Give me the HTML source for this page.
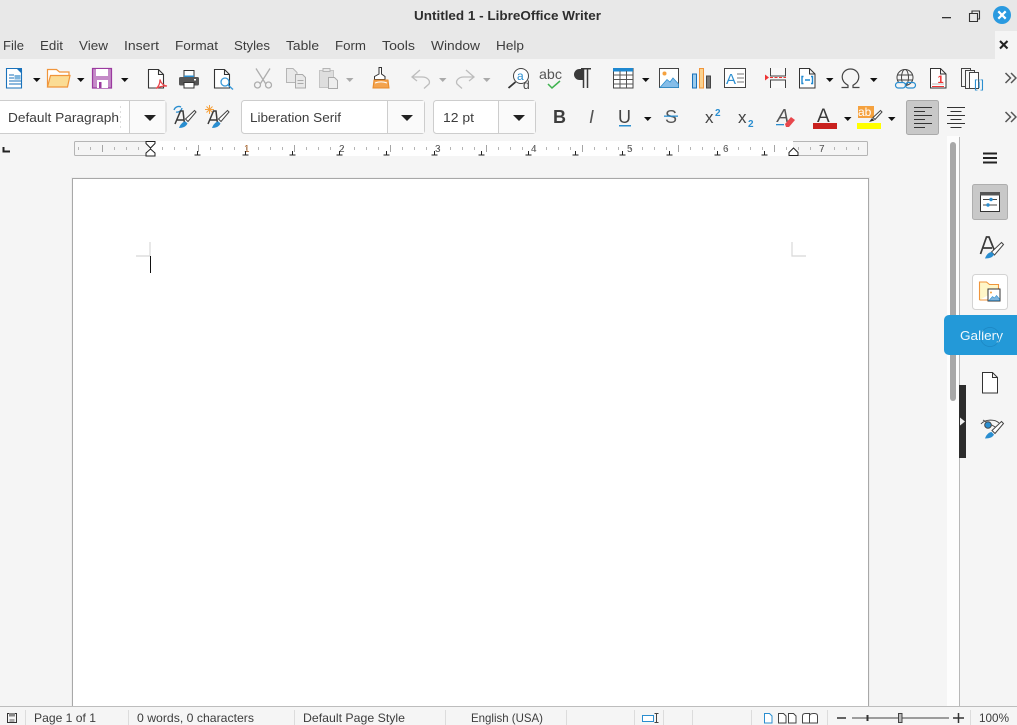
<!DOCTYPE html>
<html><head><meta charset="utf-8"><title>Untitled 1 - LibreOffice Writer</title>
<style>
html,body{margin:0;padding:0;background:#f5f5f5;overflow:hidden}
svg{display:block;position:absolute;left:0;top:0}
text{font-family:"Liberation Sans",sans-serif;fill:#3d3d3d;font-size:13px}
.s{font-size:12px}
.n{font-size:10px;fill:#555}
</style></head><body>
<svg width="1017" height="725" viewBox="0 0 1017 725" xmlns="http://www.w3.org/2000/svg">
<defs>
<pattern id="minor" x="150" y="146" width="12" height="6" patternUnits="userSpaceOnUse"><rect x="0" y="1" width="1" height="3" fill="#b5b5b5"/></pattern>
<pattern id="major" x="198" y="145" width="96" height="8" patternUnits="userSpaceOnUse"><rect x="0" y="0" width="1" height="7" fill="#a5a5a5"/></pattern>
<path id="ar" d="M0 0h7.5l-3.75 4z" fill="#111"/>
<path id="arg" d="M0 0h7.5l-3.75 4z" fill="#aaa"/>
</defs>
<!-- Backgrounds -->
<rect width="1017" height="725" fill="#f5f5f5"/>
<rect width="1017" height="59" fill="#e8e8e8"/>
<rect x="995" y="31" width="22" height="28" fill="#f5f5f5"/>
<!-- Title -->
<text x="414" y="20" font-weight="700" textLength="187" lengthAdjust="spacingAndGlyphs" style="font-size:13px;font-weight:700;fill:#2e2e2e">Untitled 1 - LibreOffice Writer</text>
<rect x="942" y="17" width="9" height="1.3" fill="#333"/>
<path d="M969.5 13.5h8v8h-8zM972 13v-2h7.5v8H978" fill="none" stroke="#333" stroke-width="1.1"/>
<circle cx="1002" cy="15" r="9" fill="#2a9ae0"/>
<path d="M998.3 11.3l7.4 7.4M1005.7 11.3l-7.4 7.4" stroke="#fff" stroke-width="2.2"/>
<!-- Menu -->
<g>
<text x="3" y="50" textLength="21" lengthAdjust="spacingAndGlyphs">File</text>
<text x="40" y="50" textLength="23" lengthAdjust="spacingAndGlyphs">Edit</text>
<text x="79" y="50" textLength="29" lengthAdjust="spacingAndGlyphs">View</text>
<text x="124" y="50" textLength="35" lengthAdjust="spacingAndGlyphs">Insert</text>
<text x="175" y="50" textLength="43" lengthAdjust="spacingAndGlyphs">Format</text>
<text x="234" y="50" textLength="36" lengthAdjust="spacingAndGlyphs">Styles</text>
<text x="286" y="50" textLength="33" lengthAdjust="spacingAndGlyphs">Table</text>
<text x="335" y="50" textLength="31" lengthAdjust="spacingAndGlyphs">Form</text>
<text x="382" y="50" textLength="33" lengthAdjust="spacingAndGlyphs">Tools</text>
<text x="431" y="50" textLength="49" lengthAdjust="spacingAndGlyphs">Window</text>
<text x="496" y="50" textLength="28" lengthAdjust="spacingAndGlyphs">Help</text>
</g>
<path d="M1000 41l7.5 7.5M1007.5 41l-7.5 7.5" stroke="#222" stroke-width="2.1"/>

<!-- Toolbar 1 -->
<!-- New -->
<path d="M6.500 68.500h14l1 1v18.500h-15z" fill="#fff" stroke="#1a72bb" stroke-width="1.100"/><path d="M16 68h6v6z" fill="#1a72bb"/>
<path d="M9 75h5M9 78h5M9 81h12M9 84h12" stroke="#1a72bb" stroke-width="1"/><rect x="14.500" y="75" width="6" height="4.500" fill="#7fb5dd"/>
<use href="#ar" x="33" y="78"/>
<!-- Open -->
<path d="M47.500 87V69.500h9l3 2.500h9.500v4" fill="#fff" stroke="#f0953b" stroke-width="1.200"/><path d="M47.500 87l3-11.500h19.500l-2.500 11.500z" fill="#fbdc94" stroke="#f0953b" stroke-width="1.200"/>
<use href="#ar" x="77" y="78"/>
<!-- Save -->
<path d="M92.500 68.500h19v19.500h-19z" fill="#c58bc8" stroke="#9b3a9f" stroke-width="1.200"/><rect x="96" y="69" width="12" height="7" fill="#fff"/><rect x="97" y="80" width="11" height="8" fill="#fff"/><rect x="99" y="82" width="2.500" height="6" fill="#9b3a9f"/>
<use href="#ar" x="121" y="78"/>
<!-- PDF -->
<path d="M148.500 69.500h10l5 5v13.500h-15z M158.500 69.500v5h5" fill="#fff" stroke="#333" stroke-width="1.100"/>
<path d="M156 88.500c3-2 4-6 4-9 1 4 3 6 7 6.500-3 0-7 0-11 2.500z" fill="none" stroke="#e8474c" stroke-width="1.300"/>
<!-- Print -->
<rect x="184" y="70.500" width="10" height="7" fill="#fff" stroke="#333"/><rect x="184" y="75.500" width="10" height="2.500" fill="#2a8ed0"/><rect x="179" y="77" width="20" height="8.500" rx="1.500" fill="#565656"/><rect x="184" y="82.500" width="10" height="5.500" fill="#fff" stroke="#333"/><rect x="194" y="79" width="2" height="1.500" fill="#fff"/>
<!-- Preview -->
<path d="M214.500 69.500h10l5 5v13.500h-15zM224.500 69.500v5h5" fill="#fff" stroke="#333" stroke-width="1.100"/><circle cx="225" cy="82" r="4" fill="#fff" stroke="#3a9ad9" stroke-width="1.300"/><path d="M228 85l5 4.500" stroke="#3a9ad9" stroke-width="1.500"/>
<!-- Cut -->
<g fill="none" stroke="#aeaeae" stroke-width="1.300"><path d="M256 68.500l9.500 15M270 68.500l-9.500 15"/><circle cx="257.500" cy="85" r="3"/><circle cx="268.500" cy="85" r="3"/></g>
<!-- Copy -->
<path d="M286.500 68.500h6.500l4 4v10h-10.500z" fill="#e8e8e8" stroke="#b5b5b5"/><path d="M295.500 74.500h7l3 3v10.500h-10z" fill="#e8e8e8" stroke="#aaa"/><path d="M297.500 80.500h6M297.500 83.500h6" stroke="#aaa"/>
<!-- Paste -->
<path d="M319.500 70.500h14v17h-14z" fill="#dedede" stroke="#c4c4c4"/><rect x="323" y="68.500" width="7" height="3" fill="#e8e8e8" stroke="#b5b5b5"/><path d="M328.500 77.500h6l3 3v8h-9z" fill="#eee" stroke="#aaa"/>
<use href="#arg" x="346" y="78"/>
<!-- Clone -->
<path d="M379 67.500h2.500v6.500l3.500 2.500v3h-10.500v-3l4.500-2.500z" fill="#fff" stroke="#333"/><path d="M374 80h14l1 8h-16z" fill="#f3a34e" stroke="#e88a2a"/><path d="M375 83c4-1.500 8-1.500 12 0" stroke="#fff" fill="none"/>
<!-- Undo/Redo -->
<g fill="none" stroke="#bdbdbd" stroke-width="1.300"><path d="M412 77h10c6 0 8.500 4 7 7l-5 4.500M420 70l-8 7 5 4"/><path d="M474 77h-10c-6 0-8.500 4-7 7l5 4.500M466 70l8 7-5 4"/></g>
<use href="#arg" x="439" y="78"/><use href="#arg" x="483" y="78"/>
<!-- Find -->
<circle cx="521" cy="76" r="7.500" fill="#fff" stroke="#444" stroke-width="1"/><path d="M515.500 82l-7 6" stroke="#333" stroke-width="1.800"/>
<text x="517" y="80" style="font-size:12px;fill:#2a8ed0">a</text><text x="523" y="89" style="font-size:12px;fill:#444">d</text>
<!-- abc -->
<text x="539" y="79" textLength="23" lengthAdjust="spacingAndGlyphs" style="font-size:14px;fill:#555">abc</text>
<path d="M548 84l4 4 8-7" fill="none" stroke="#3fb24f" stroke-width="1.500"/>
<!-- Pilcrow -->
<path d="M583 69h-3.500a5.500 5.500 0 0 0 0 11H583z" fill="#3a3a3a"/><path d="M583.500 69v19M587.500 69v19M581 68.800h10" stroke="#3a3a3a" stroke-width="1.500"/>
<!-- Table -->
<rect x="613.500" y="68.500" width="19.500" height="19.500" fill="#fff" stroke="#444"/><rect x="613" y="68" width="20" height="3.500" fill="#1e88d0"/><path d="M613.500 75h19.500M613.500 79.500h19.500M613.500 84h19.500M620 71v17M626.500 71v17" stroke="#555" stroke-width="1"/>
<use href="#ar" x="642" y="78"/>
<!-- Image -->
<rect x="659.500" y="68.500" width="19" height="19" fill="#fff" stroke="#444"/><circle cx="664.500" cy="73.500" r="2" fill="#f5a13e"/><path d="M660 87.500l7-8 3 2.500 3-4 5.500 6v3.500z" fill="#85bde8" stroke="#2a8ed0" stroke-width=".8"/>
<!-- Chart -->
<rect x="692.500" y="74" width="4" height="14" fill="#9ccbec" stroke="#1a72bb"/><rect x="699.500" y="68.500" width="4" height="19.500" fill="#fbd28f" stroke="#f0953b"/><rect x="706.500" y="76" width="4" height="12" fill="#777" stroke="#444"/>
<!-- Textbox -->
<rect x="724.500" y="68.500" width="21" height="19" fill="#fff" stroke="#444"/><text x="726" y="84" style="font-size:15px;fill:#2a8ed0">A</text><path d="M737 74h7M737 78h7M737 82h7" stroke="#777"/>
<!-- Page break -->
<path d="M770.500 68v8h15v-8M770.500 88v-8h15v8" fill="#f9f9f9" stroke="#444"/><path d="M770 77.500h16" stroke="#e33" stroke-dasharray="3 1.500"/><path d="M765 74.500l4 3-4 3z" fill="#e33"/>
<!-- Field -->
<path d="M799.500 68.500h10l5.500 5.500v14h-15.500zM809.500 68.500v5.500h5.500" fill="#fff" stroke="#333"/><path d="M803.500 76.500h-1.500v7h1.500M811 76.500h1.500v7H811M805 80h5" fill="none" stroke="#1e88d0" stroke-width="1.400"/>
<use href="#ar" x="826" y="78"/>
<!-- Omega -->
<path d="M841.500 87.500h6.500v-2.200c-3.500-2-5.800-5-5.800-8.300 0-4.500 3.500-8 8.300-8s8.300 3.500 8.300 8c0 3.300-2.300 6.300-5.800 8.300v2.200h6.500" fill="none" stroke="#444" stroke-width="1.200"/>
<use href="#ar" x="870" y="78"/>
<!-- Link -->
<g fill="none" stroke="#444"><circle cx="905" cy="77.500" r="8"/><ellipse cx="905" cy="77.500" rx="3.500" ry="8"/><path d="M897 75h16M897 80h16"/></g>
<rect x="895.500" y="82.500" width="10" height="5.500" rx="2.700" fill="#f5f5f5" stroke="#2a8ed0" stroke-width="1.200"/><rect x="905.500" y="82.500" width="10" height="5.500" rx="2.700" fill="none" stroke="#2a8ed0" stroke-width="1.200"/>
<!-- Footnote -->
<path d="M930.500 68.500h10l5.500 5.500v14h-15.500zM940.500 68.500v5.500h5.500" fill="#fff" stroke="#333"/><text x="937.500" y="83" style="font-size:11px;fill:#e33;font-weight:700">1</text><path d="M932 84h12" stroke="#bbb"/><path d="M932 86.500h12" stroke="#e33"/>
<!-- Index -->
<path d="M961.500 68.500h9v18h-9z" fill="#f5f5f5" stroke="#444"/><path d="M965.500 70.500h9v18h-9z" fill="#f5f5f5" stroke="#444"/><path d="M969.500 72.500h9v16h-9z" fill="#fff" stroke="#444"/>
<text x="974" y="88" textLength="10" lengthAdjust="spacingAndGlyphs" style="font-size:12px;fill:#2a8ed0">[i]</text>
<!-- more -->
<path d="M1005.500 73l5 5-5 5M1011 73l5 5-5 5" fill="none" stroke="#555" stroke-width="1.500"/>

<!-- Toolbar 2 -->
<rect x="-3" y="100.500" width="169" height="33" rx="3" fill="#fff" stroke="#cdcdcd"/><rect x="130" y="101" width="35.500" height="32" fill="#fafafa"/><path d="M129.500 101v32" stroke="#cdcdcd"/>
<text x="8" y="122" textLength="111" lengthAdjust="spacingAndGlyphs">Default Paragraph</text><path d="M120.500 106v23" stroke="#ddd" stroke-dasharray="2 3"/>
<path d="M144 115h12l-6 6z" fill="#222"/>
<rect x="241.500" y="100.500" width="183" height="33" rx="3" fill="#fff" stroke="#cdcdcd"/><rect x="388" y="101" width="36" height="32" fill="#fafafa"/><path d="M387.500 101v32" stroke="#cdcdcd"/>
<text x="250" y="122" textLength="91" lengthAdjust="spacingAndGlyphs">Liberation Serif</text>
<path d="M401 115h12l-6 6z" fill="#222"/>
<rect x="433.500" y="100.500" width="102" height="33" rx="3" fill="#fff" stroke="#cdcdcd"/><rect x="499" y="101" width="36" height="32" fill="#fafafa"/><path d="M498.500 101v32" stroke="#cdcdcd"/>
<text x="443" y="122" textLength="31" lengthAdjust="spacingAndGlyphs">12 pt</text>
<path d="M513 115h12l-6 6z" fill="#222"/>
<!-- style icons -->
<path d="M174 110a5 5 0 0 1 7-3M182 108a5 5 0 0 1-6 4" fill="none" stroke="#2a8ed0" stroke-width="1.300"/>
<path d="M175 124l5.500-13h2.500l1.500 13M177 120h7" fill="none" stroke="#3a3a3a" stroke-width="1.500"/><path d="M194.500 110.500l-9 8.500 2.500 2.500 8-9.500z" fill="#fff" stroke="#444"/><path d="M179 128c1-3 3-6 6.500-6.500l2 2c-1 2.500-4 4.500-8.500 4.500z" fill="#2a8ed0"/>
<path d="M209.500 105v9M205 109.500h9M206.500 106.500l6 6M212.500 106.500l-6 6" stroke="#f5a13e" stroke-width="1"/>
<path d="M208 124l5.500-13h2.500l1.500 13M210 120h7" fill="none" stroke="#3a3a3a" stroke-width="1.500"/><path d="M227.500 110.500l-9 8.500 2.500 2.500 8-9.500z" fill="#fff" stroke="#444"/><path d="M212 128c1-3 3-6 6.500-6.500l2 2c-1 2.500-4 4.500-8.500 4.500z" fill="#2a8ed0"/>
<!-- B I U S -->
<text x="553" y="123" style="font-size:18px;font-weight:700">B</text>
<text x="589" y="123" style="font-size:18px;font-style:italic;fill:#555">I</text>
<text x="618" y="123" style="font-size:18px;fill:#444">U</text><rect x="619" y="125" width="12" height="1.500" fill="#2a8ed0"/>
<use href="#ar" x="644" y="117"/>
<text x="665" y="123" style="font-size:18px;fill:#555">S</text><rect x="664" y="115.500" width="14" height="1.300" fill="#2a8ed0"/>
<text x="705" y="123" style="font-size:17px;fill:#444">x</text><text x="715" y="116" style="font-size:10px;font-weight:700;fill:#2a8ed0">2</text>
<text x="738" y="123" style="font-size:17px;fill:#444">x</text><text x="748" y="127" style="font-size:10px;font-weight:700;fill:#2a8ed0">2</text>
<text x="777" y="122" style="font-size:18px;font-style:italic;fill:#555">A</text><rect x="776" y="124" width="8" height="1.300" fill="#2a8ed0"/><path d="M785 124l6-7 4 3-6 7h-3z" fill="#e8474c"/>
<text x="817" y="122" style="font-size:19px;fill:#3a3a3a">A</text><rect x="813" y="123" width="24" height="6" fill="#c9211e"/>
<use href="#ar" x="844" y="117"/>
<rect x="858" y="106" width="16" height="12" fill="#f5a13e"/><text x="858" y="116" style="font-size:12px;fill:#fff">ab</text><path d="M880.500 110.500l-7.500 7 2 2 7-7.500z" fill="#fff" stroke="#444"/><path d="M869 122l3-4 2.500 2.500z" fill="#333"/><rect x="857" y="123" width="24" height="6" fill="#ff0"/>
<use href="#ar" x="888" y="117"/>
<rect x="906.500" y="100.500" width="32" height="34" rx="2" fill="#c8c8c8" stroke="#aaa"/>
<path d="M914 107.500h18M914 111.500h11M914 115.500h18M914 119.500h11M914 123.500h18M914 127.500h11" stroke="#333" stroke-width="1"/>
<path d="M947 107.500h18M950.500 111.500h11M947 115.500h18M950.500 119.500h11M947 123.500h18M950.500 127.500h11" stroke="#333" stroke-width="1"/>
<path d="M1005.500 112l5 5-5 5M1011 112l5 5-5 5" fill="none" stroke="#555" stroke-width="1.500"/>

<!-- Ruler -->
<path d="M3.500 147v4.500H10" fill="none" stroke="#222" stroke-width="2"/>
<rect x="74.500" y="141.500" width="793" height="14" rx="1" fill="#f5f5f5" stroke="#b5b5b5"/>
<rect x="150" y="141" width="643" height="15" fill="#fff"/>
<rect x="78" y="146" width="786" height="4" fill="url(#minor)"/>
<rect x="78" y="145" width="786" height="8" fill="url(#major)"/>
<rect x="102" y="145" width="1" height="7" fill="#a5a5a5"/>
<g id="nums"><text class="n" x="244" y="152" style="fill:#a8642b">1</text><text class="n" x="339" y="152">2</text><text class="n" x="435" y="152">3</text><text class="n" x="531" y="152">4</text><text class="n" x="627" y="152">5</text><text class="n" x="723" y="152">6</text><text class="n" x="819" y="152">7</text></g>
<path d="M197.500 155v-4M194.500 155h6M245.500 155v-4M242.500 155h6M292.500 155v-4M289.500 155h6M339.500 155v-4M336.500 155h6M386.500 155v-4M383.500 155h6M434.500 155v-4M431.500 155h6M481.500 155v-4M478.500 155h6M528.500 155v-4M525.500 155h6M575.500 155v-4M572.500 155h6M622.500 155v-4M619.500 155h6M669.500 155v-4M666.500 155h6M717.500 155v-4M714.500 155h6M764.500 155v-4M761.500 155h6" stroke="#222" stroke-width="1" fill="none"/>
<path d="M146 141.500h9v2l-4.500 4.500-4.500-4.500z" fill="#fff" stroke="#222"/><path d="M146 156v-3l4.500-4 4.500 4v3z" fill="#fff" stroke="#222"/>
<path d="M789 155.500v-3l4.500-4.500 4.500 4.500v3z" fill="#fff" stroke="#222"/>

<!-- Document area -->
<rect x="947" y="136" width="12" height="570" fill="#fdfdfd"/>
<rect x="950" y="142" width="6" height="259" rx="3" fill="#a8a8a8"/>
<rect x="959" y="137" width="1" height="569" fill="#b8b8b8"/>
<rect x="959" y="385" width="7" height="73" fill="#2c2c2c"/><path d="M960 417.500l5 4-5 4z" fill="#eee"/>
<rect x="71" y="177" width="799" height="529" fill="#eeeeee"/>
<rect x="72.500" y="178.500" width="796" height="540" fill="#fff" stroke="#a8a8a8"/>
<path d="M150 242v14h-14M792 242v14h14" fill="none" stroke="#d8d8d8" stroke-width="1.200"/>
<rect x="150" y="256" width="1" height="17" fill="#111"/>

<!-- Sidebar -->
<path d="M983 153.500h14M983 158h14M983 162.500h14" stroke="#222" stroke-width="1.900"/>
<rect x="972.500" y="184.500" width="35" height="35" rx="2" fill="#c8c8c8" stroke="#aeaeae"/>
<rect x="980.500" y="192.500" width="19" height="19" fill="#fff" stroke="#333"/><rect x="980" y="192" width="20" height="3.500" fill="#555"/><path d="M983 199.500h14M983 205h14" stroke="#444"/><circle cx="991" cy="199.500" r="1.700" fill="#2a8ed0"/><circle cx="988" cy="205" r="1.700" fill="#2a8ed0"/>
<path d="M980.500 254l6-17h2.500l6 15M983 248h9" fill="none" stroke="#3a3a3a" stroke-width="1.700"/><path d="M1001.500 242.500l-10 9.500 3 3 9-10.500z" fill="#fff" stroke="#444"/><path d="M985 258.500c1-3 3-6 6.500-6.500l2.500 2.500c-1 2.500-4 4-9 4z" fill="#2a8ed0"/>
<rect x="972.500" y="274.500" width="35" height="35" rx="3" fill="#fff" stroke="#d3d3d3"/>
<path d="M979.500 300v-18h7l3 2.500h9v5" fill="#fff6c8" stroke="#f0953b" stroke-width="1.100"/><path d="M979.500 300h9v-8h10" fill="none" stroke="#f0953b"/>
<rect x="988" y="289" width="12" height="12" fill="#fff" stroke="#333"/><path d="M989 300.500l3.500-4 2 1.500 2-2.500 3 3.500v1.500z" fill="#7fb5dd" stroke="#2a8ed0" stroke-width=".6"/><circle cx="991" cy="292.500" r="1" fill="#f5a13e"/>
<path d="M982.500 372.500h10l5 5v15.500h-15zM992.500 372.500v5h5" fill="#fff" stroke="#333"/>
<path d="M981 424c4-5 14-5 18-1M983 420l14 8" fill="none" stroke="#444"/><circle cx="988" cy="425" r="3.300" fill="#2a8ed0" stroke="#444"/><path d="M1001.500 421.500l-9.500 9 3 3 8.500-10z" fill="#fff" stroke="#444"/><path d="M985 438.500c1-3 3-6 6.500-6.500l2.500 2.500c-1 2.500-4 4-9 4z" fill="#2a8ed0"/>
<!-- Gallery tooltip -->
<path d="M949 315h68v40h-68a5 5 0 0 1-5-5v-30a5 5 0 0 1 5-5z" fill="#2399d8"/>
<text x="960" y="340" textLength="43" lengthAdjust="spacingAndGlyphs" style="fill:#eef7fc">Gallery</text>
<circle cx="990" cy="337" r="9.500" fill="none" stroke="#1c86c2" stroke-width=".7"/>

<!-- Status bar -->
<rect x="0" y="706" width="1017" height="19" fill="#f5f5f5"/>
<rect x="0" y="706" width="1017" height="1" fill="#bdbdbd"/>
<path d="M7.500 713.500h9v9h-9z" fill="none" stroke="#333"/><rect x="9" y="713" width="6" height="3.500" fill="#888"/><rect x="9.500" y="719" width="5" height="3" fill="#aaa"/>
<g fill="#dcdcdc"><rect x="25" y="710" width="1" height="15"/><rect x="128" y="710" width="1" height="15"/><rect x="294" y="710" width="1" height="15"/><rect x="445" y="710" width="1" height="15"/><rect x="566" y="710" width="1" height="15"/><rect x="634" y="710" width="1" height="15"/><rect x="663" y="710" width="1" height="15"/><rect x="692" y="710" width="1" height="15"/><rect x="751" y="710" width="1" height="15"/><rect x="827" y="710" width="1" height="15"/><rect x="970" y="710" width="1" height="15"/></g>
<text class="s" x="34" y="722" textLength="62" lengthAdjust="spacingAndGlyphs">Page 1 of 1</text>
<text class="s" x="137" y="722" textLength="117" lengthAdjust="spacingAndGlyphs">0 words, 0 characters</text>
<text class="s" x="303" y="722" textLength="102" lengthAdjust="spacingAndGlyphs">Default Page Style</text>
<text class="s" x="471" y="722" textLength="72" lengthAdjust="spacingAndGlyphs">English (USA)</text>
<rect x="642.500" y="715.500" width="11" height="6" fill="#fff" stroke="#2a8ed0"/>
<path d="M654.500 713.500h4M654.500 722.500h4M656.500 713.500v9" stroke="#444" fill="none"/>
<path d="M764.500 713.500h5l2.500 2.500v7h-7.500z" fill="#fff" stroke="#2a8ed0"/>
<path d="M778.500 713.500h5l2.500 2.500v7h-7.500zM788.500 713.500h5l2.500 2.500v7h-7.500z" fill="#fff" stroke="#444"/>
<path d="M802.500 723v-7q0-2.500 3-2.500h4v9.500zM809.500 723v-7q0-2.500 4-2.500h1q3 0 3 2.500v7z" fill="#fff" stroke="#444"/>
<path d="M837 718h9M953 718h11M958.500 713v10" stroke="#333" stroke-width="1.500"/>
<rect x="852" y="717.500" width="97" height="1" fill="#444"/><rect x="866.500" y="715" width="2" height="6" fill="#333"/>
<rect x="898.500" y="713.500" width="3.500" height="9" fill="#bbb" stroke="#444"/>
<text class="s" x="979" y="722" textLength="30" lengthAdjust="spacingAndGlyphs">100%</text>
</svg>
</body></html>
